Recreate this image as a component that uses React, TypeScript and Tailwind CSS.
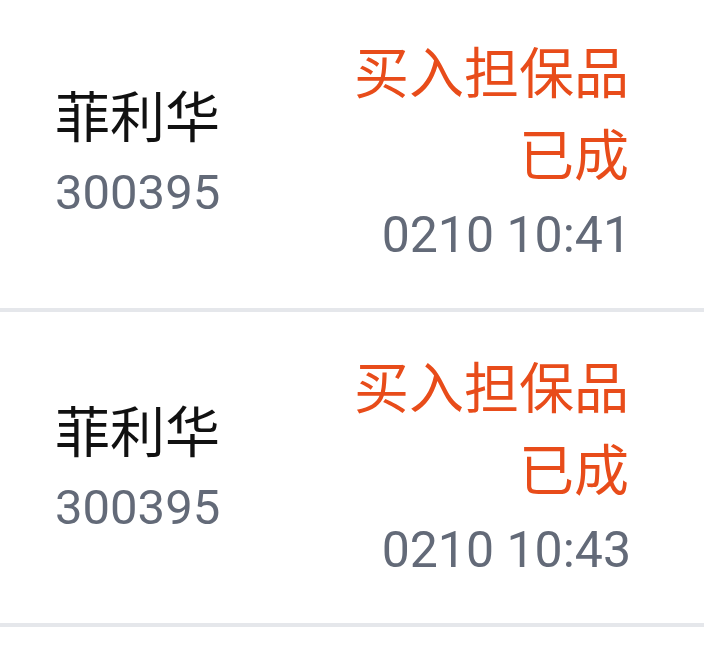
const ORDERS = [
  { name: '菲利华', code: '300395', action: '买入担保品', status: '已成', time: '0210 10:41' },
  { name: '菲利华', code: '300395', action: '买入担保品', status: '已成', time: '0210 10:43' },
];

const FONT = "font-['Roboto','Noto_Sans_CJK_SC',sans-serif]";

export default function App() {
  return (
    <div className={`h-[653px] w-[704px] overflow-hidden bg-white ${FONT}`}>
      <div className="-mt-[3px]">
        {ORDERS.map((o, i) => (
          <div
            key={i}
            className="flex h-[315px] items-center justify-between border-b-4 border-[#e5e7eb] pl-[55px] pr-[75px]"
          >
            {/* name + code */}
            <div className="flex flex-col gap-[22px] pt-[2px]">
              <span className="text-[55px] leading-[56px] text-[#111111]">{o.name}</span>
              <span className="text-[49px] leading-[50px] text-[#636a78]">{o.code}</span>
            </div>
            {/* order info */}
            <div className="flex flex-col items-end">
              <span className="text-[55px] leading-[82px] text-[#e84c1a]">{o.action}</span>
              <span className="text-[55px] leading-[82px] text-[#e84c1a]">{o.status}</span>
              <span className="-mr-[2px] text-[50px] leading-[76px] text-[#636a78]">{o.time}</span>
            </div>
          </div>
        ))}
      </div>
    </div>
  );
}
